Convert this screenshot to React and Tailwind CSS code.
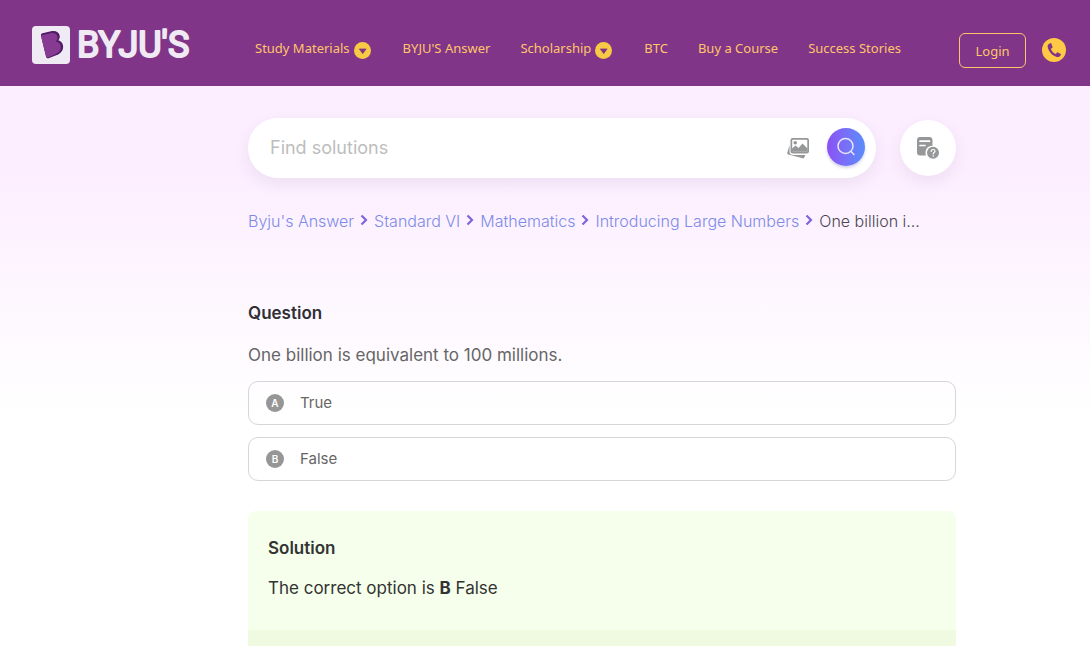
import React from "react";

const navItems = [
  { label: "Study Materials", menu: true },
  { label: "BYJU'S Answer" },
  { label: "Scholarship", menu: true },
  { label: "BTC" },
  { label: "Buy a Course" },
  { label: "Success Stories" },
];

const crumbs = ["Byju's Answer", "Standard VI", "Mathematics", "Introducing Large Numbers"];

const options = [
  { key: "A", text: "True" },
  { key: "B", text: "False" },
];

const Logo = () => (
  <svg width="162" height="40" viewBox="0 0 162 40" role="img" aria-label="BYJU'S">
    <rect x="0" y="1" width="38" height="38" rx="4" fill="#efeaf3" />
    <path
      d="M9 10.500c-.2-1 .4-1.900 1.500-2.200l8.500-2c4.500-1 7.800.6 8.600 4 .5 2-.1 3.700-1.300 5 2.600.8 4.200 2.500 4.700 5.200.8 4.600-2.200 8.300-6.800 9.800l-7 2.800c-1.700.5-2.800-.1-3.200-1.700z"
      fill="#4f1c66"
    />
    <path
      d="M9.200 12c-.2-1.100.4-1.800 1.400-2.100l7.400-1.700c4.200-.9 7 .5 7.500 3.500.3 2-.5 3.500-1.700 4.700 2.700.4 4.600 2 5 4.700.5 4-2 7-6.200 8.500l-5.800 2.700c-1.600.6-2.500 0-2.900-1.500z"
      fill="#863a92"
    />
    <text
      x="45"
      y="32"
      fill="#efeaf3"
      stroke="#efeaf3"
      strokeWidth="2"
      strokeLinejoin="round"
      className="font-[Roboto,sans-serif] text-[36px]"
    >
      BYJU'S
    </text>
  </svg>
);

const MenuBadge = () => (
  <svg width="17" height="17" viewBox="0 0 16 16" className="mr-[2px] mt-[3px]" aria-hidden="true">
    <circle cx="8" cy="8" r="8" fill="#f8c944" />
    <path d="M5 6.500h6.400L8.200 11z" fill="#813588" stroke="#813588" strokeWidth=".6" strokeLinejoin="round" />
  </svg>
);

const PhoneIcon = () => (
  <svg width="24" height="24" viewBox="0 0 24 24" aria-hidden="true">
    <circle cx="12" cy="12" r="12" fill="#ffc845" />
    <path
      d="M8.300 5.200 6.500 6.300c-1.300 1-1.100 3.300.3 6 1.700 3.300 4.400 5.700 7.300 6.500 2 .5 3.300.1 4.200-1l.6-1c.2-.4.100-.7-.2-.9l-2.700-1.500c-.4-.2-.8-.1-1 .2l-.9 1.100c-.3.300-.6.300-1 .1-1.700-.9-3.200-2.500-4-4.400-.1-.4-.1-.7.200-.9l1-.8c.3-.3.400-.6.200-1L9.300 5.500c-.2-.4-.6-.5-1-.3z"
      fill="#813588"
    />
  </svg>
);

const GalleryIcon = () => (
  <svg width="24" height="24" viewBox="0 0 24 24" aria-hidden="true">
    <path d="M2.500 9 .3 16.800c-.2.800.2 1.400.9 1.600l15.500 4.200 1.800-3.600H6c-2.200 0-3.500-1.300-3.500-3.500z" fill="#959798" />
    <rect x="3.500" y="2" width="18.500" height="15.500" rx="2.200" fill="#959798" />
    <rect x="5.200" y="3.700" width="15.100" height="12.100" rx=".8" fill="#fff" />
    <circle cx="8.200" cy="6.800" r="1.800" fill="#959798" />
    <path d="M5 15.800v-3.300l3.500-3 3 2.500 4-4.500 5 5v3.300z" fill="#959798" />
  </svg>
);

const SearchIcon = () => (
  <svg width="20" height="20" viewBox="0 0 20 20" fill="none" stroke="#e9e4ff" strokeWidth="1.500" strokeLinecap="round" aria-hidden="true">
    <circle cx="9.500" cy="9" r="7.500" />
    <path d="m15 14.500 3 3" />
  </svg>
);

const QuestionIcon = () => (
  <svg width="24" height="24" viewBox="0 0 24 24" aria-hidden="true">
    <path d="M4 1h9.500C15.500 1 16.500 2.300 16.500 4.300v5.400c-4.400.2-7 3-7 7.300 0 1 .1 1.800.5 2.500H4c-1.800 0-3-1.200-3-3V4c0-1.800 1.200-3 3-3z" fill="#959798" />
    <path d="M4 5.200h9.500M4 9.500h5" stroke="#fff" strokeWidth="1.700" strokeLinecap="round" />
    <circle cx="17" cy="16.700" r="6" fill="#959798" />
    <path d="M15.200 15.400c0-1.200.8-1.900 1.900-1.900s1.900.7 1.900 1.700c0 1.300-1.800 1.400-1.800 2.700" fill="none" stroke="#fff" strokeWidth="1.200" strokeLinecap="round" />
    <circle cx="17.200" cy="20" r=".8" fill="#fff" />
  </svg>
);

const CrumbArrow = () => (
  <svg width="8" height="12" viewBox="0 0 8 12" fill="none" stroke="#7c66d9" strokeWidth="2.200" className="mb-[2px]" aria-hidden="true">
    <path d="m1.500 1.500 4.500 4.500-4.500 4.500" />
  </svg>
);

const Header = () => (
  <header className="flex h-[86px] items-center bg-[#813588] pl-8 pr-6 font-['Noto_Sans',sans-serif] text-[13px] text-[#ffc56b]">
    <a href="#home" className="mt-1 w-[223px] shrink-0">
      <Logo />
    </a>
    <nav className="mt-3 flex flex-1 items-center gap-[30px]">
      {navItems.map((item) => (
        <a key={item.label} href="#nav" className="flex h-5 items-center gap-1 whitespace-nowrap">
          {item.label}
          {item.menu && <MenuBadge />}
        </a>
      ))}
    </nav>
    <div className="mt-[14px] flex items-center gap-4">
      <button className="h-[35px] w-[67px] rounded-md border border-[#ffc56b] pt-1">Login</button>
      <button aria-label="Call us">
        <PhoneIcon />
      </button>
    </div>
  </header>
);

const SearchBar = () => (
  <div className="flex items-center gap-6">
    <form className="flex h-[60px] flex-1 items-center rounded-full bg-white pl-[22px] pr-[11px] shadow-[0_6px_16px_rgba(70,50,90,0.08)]">
      <input
        type="text"
        aria-label="Find solutions"
        placeholder="Find solutions"
        className="min-w-0 flex-1 text-lg outline-none placeholder:text-[#bdbdbd]"
      />
      <button type="button" aria-label="Search by image" className="mr-4">
        <GalleryIcon />
      </button>
      <button
        type="button"
        aria-label="Search"
        className="mb-[2px] flex size-[38px] items-center justify-center rounded-full bg-linear-to-r from-[#8a50f5] to-[#568cfb] shadow-[0_2px_3px_rgba(80,80,180,0.25)]"
      >
        <SearchIcon />
      </button>
    </form>
    <button
      aria-label="Ask a question"
      className="flex size-14 items-center justify-center rounded-full bg-white shadow-[0_6px_16px_rgba(70,50,90,0.08)]"
    >
      <QuestionIcon />
    </button>
  </div>
);

const Breadcrumbs = () => (
  <nav className="mt-[31px] flex h-6 items-center gap-[6px] whitespace-nowrap text-base font-light text-[#7d8be8]">
    {crumbs.map((crumb) => (
      <React.Fragment key={crumb}>
        <a href="#crumb">{crumb}</a>
        <CrumbArrow />
      </React.Fragment>
    ))}
    <span className="text-[#4a4650]">One billion i...</span>
  </nav>
);

const App = () => {
  return (
    <div className="min-h-screen bg-white font-[Inter,sans-serif]">
      <Header />
      <main className="bg-linear-to-b from-[#fcedff] from-[70px] to-white to-[330px] pl-[248px] pr-[134px] pt-8">
        <SearchBar />
        <Breadcrumbs />

        <section className="mt-[68px]">
          <h2 className="text-[17px] font-semibold leading-6 text-[#2f2f35]">Question</h2>
          <p className="mt-[18px] text-[17px] leading-6 text-[#666]">
            One billion is equivalent to 100 millions.
          </p>
          <ul className="mt-[14px] flex flex-col gap-3">
            {options.map((option) => (
              <li
                key={option.key}
                className="flex h-11 items-center gap-4 rounded-[10px] border border-[#d6d6da] px-[17px] text-[15px] text-[#666]"
              >
                <span className="flex size-[18px] items-center justify-center rounded-full bg-[#969696] text-[10px] font-semibold text-white">
                  {option.key}
                </span>
                {option.text}
              </li>
            ))}
          </ul>
        </section>

        <section className="mt-[30px] overflow-hidden rounded-t-lg bg-[#f5ffeb]">
          <div className="px-5 pb-[30px] pt-[25px] text-[#333]">
            <h2 className="text-[17px] font-semibold leading-6">Solution</h2>
            <p className="mt-4 text-[17px] leading-6">
              The correct option is <b>B</b> False
            </p>
          </div>
          <div className="h-4 bg-[#effae1]" />
        </section>
      </main>
    </div>
  );
};

export default App;
